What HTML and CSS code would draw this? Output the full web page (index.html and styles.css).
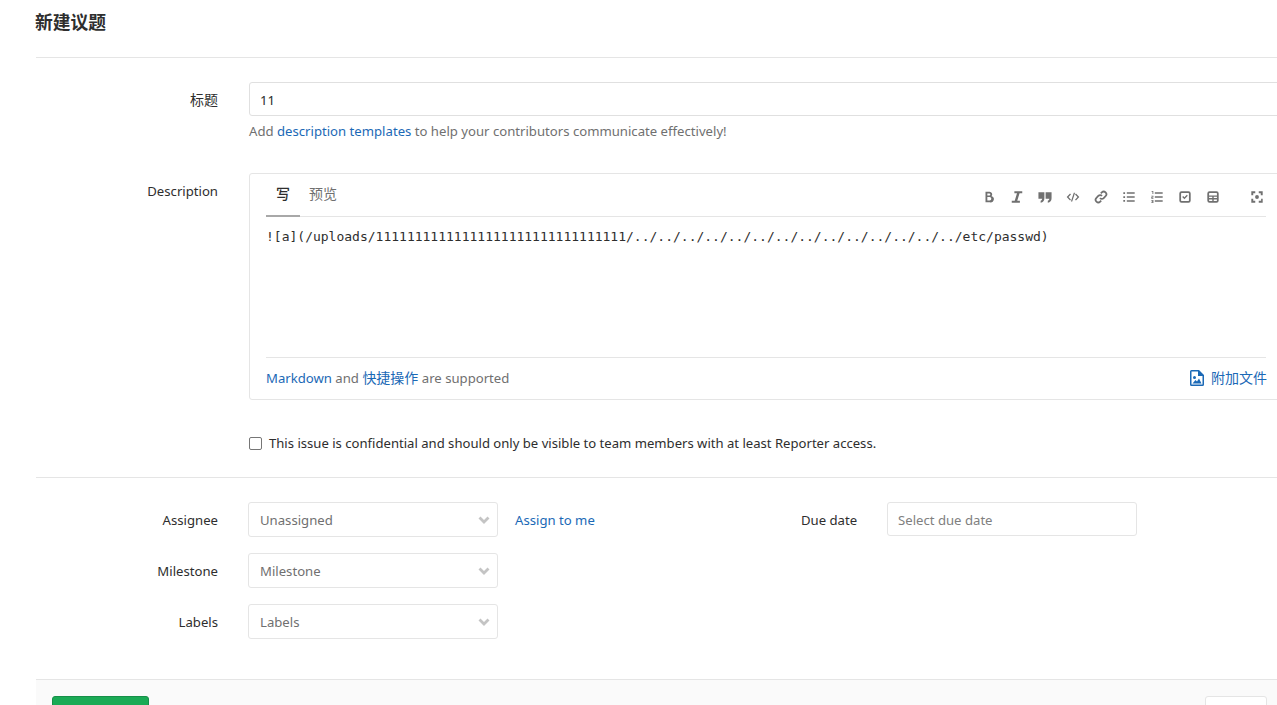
FILE: index.html
```html
<!DOCTYPE html>
<html lang="zh">
<head>
<meta charset="utf-8">
<title>新建议题</title>
<link rel="stylesheet" href="styles.css">
</head>
<body>
<main class="page">
  <h1 class="title">新建议题</h1>
  <form class="form">
    <section class="block top">
      <div class="row title-row">
        <label class="label"><span class="zh">标题</span></label>
        <div class="field">
          <div class="input wide">11</div>
          <p class="help">Add <a>description templates</a> to help your contributors communicate effectively!</p>
        </div>
      </div>
      <div class="row desc-row">
        <label class="label">Description</label>
        <div class="field">
          <div class="editor">
            <div class="editor-head">
              <div class="tabs">
                <span class="tab active zh">写</span>
                <span class="tab zh">预览</span>
              </div>
              <div class="tools">
                <svg class="ico" viewBox="0 0 16 16"><path d="M4 2h4.600a3 3 0 0 1 2.300 5A3.300 3.300 0 0 1 9 14H4zm2.100 2v2.200h2.300a1.100 1.100 0 0 0 0-2.200zm0 4.100V12h2.600a1.950 1.950 0 0 0 0-3.900z"/></svg>
                <svg class="ico" viewBox="0 0 16 16"><path d="M5 1.500h9v2.300h-3.100L8.300 12.200h3v2.300H2v-2.300h3.400L8 3.800H5z"/></svg>
                <svg class="ico" viewBox="0 0 16 16"><path d="M.5 2.500h6.800v7c0 2.800-1.500 4.500-4.300 5.200v-2.300c1-.4 1.600-1.100 1.800-2.400H.5zm8.200 0h6.800v7c0 2.800-1.500 4.500-4.300 5.200v-2.300c1-.4 1.600-1.100 1.800-2.400H8.700z"/></svg>
                <svg class="ico" viewBox="0 0 16 16"><path d="M4.600 4 .8 8l3.800 4 1.100-1L2.900 8l2.800-3zm6.800 0 3.800 4-3.800 4-1.100-1 2.800-3-2.800-3zM8.900 3h1.500L7.100 13H5.600z"/></svg>
                <svg class="ico" viewBox="0 0 16 16"><path class="line" d="M6.800 9.200a3 3 0 0 0 4.300 0l2.100-2.100a3 3 0 0 0-4.300-4.300L7.800 3.900M9.200 6.800a3 3 0 0 0-4.300 0L2.800 8.900a3 3 0 0 0 4.300 4.300l1.100-1.100"/></svg>
                <svg class="ico" viewBox="0 0 16 16"><path d="M1.500 2.500h2v2h-2zm4 .2h9v1.600h-9zM1.500 7h2v2h-2zm4 .2h9v1.600h-9zM1.500 11.500h2v2h-2zm4 .2h9v1.600h-9z"/></svg>
                <svg class="ico" viewBox="0 0 16 16"><path d="M1.800 1h2v3.600H2.800V2h-1zm3.700 1.700h9v1.600h-9zm0 4.500h9v1.600h-9zm0 4.500h9v1.600h-9zM1.500 6.500h2.400v2.200H2.600v.5h1.300v.9H1.500V7.900h1.400v-.5H1.500zm0 5h2.400v3.400H1.500V14h1.400v-.4H2v-.8h.9v-.4H1.500z"/></svg>
                <svg class="ico" viewBox="0 0 16 16"><path d="M4 1.500h8A2.500 2.500 0 0 1 14.500 4v8a2.500 2.500 0 0 1-2.500 2.500H4A2.500 2.500 0 0 1 1.500 12V4A2.500 2.500 0 0 1 4 1.500zm0 2a.5.5 0 0 0-.5.500v8a.5.5 0 0 0 .5.5h8a.5.5 0 0 0 .5-.5V4a.5.5 0 0 0-.5-.5zM4.800 8l1.100-1.100 1.400 1.400 2.800-2.900 1.100 1.100-3.900 4z"/></svg>
                <svg class="ico" viewBox="0 0 16 16"><path d="M4 1.500h8A2.500 2.500 0 0 1 14.500 4v8a2.500 2.500 0 0 1-2.500 2.500H4A2.500 2.500 0 0 1 1.500 12V4A2.500 2.500 0 0 1 4 1.500zM3.500 4v2.300h9V4a.5.5 0 0 0-.5-.5H4a.5.5 0 0 0-.5.500zm0 3.800V9.200h3.700V7.800zm5.300 0v1.400h3.700V7.800zm-5.300 3V12a.5.5 0 0 0 .5.500h3.200v-1.700zm5.300 0v1.700H12a.5.5 0 0 0 .5-.5v-1.200z"/></svg>
                <svg class="ico full" viewBox="0 0 16 16"><path d="M1.500 1.500h4.500v2.200H3.700V6H1.500zm8.500 0h4.500V6h-2.200V3.700H10zM1.500 10h2.200v2.300H6v2.200H1.500zm11.200 0h1.800v4.500H10v-2.200h2.700zM8 5.800a2.200 2.200 0 1 1 0 4.400 2.200 2.200 0 0 1 0-4.400z"/></svg>
              </div>
            </div>
            <div class="editor-body">![a](/uploads/11111111111111111111111111111111/../../../../../../../../../../../../../../etc/passwd)</div>
            <div class="editor-foot">
              <span class="note"><a>Markdown</a> and <a class="zh">快捷操作</a> are supported</span>
              <a class="attach zh">
                <svg class="attach-ico" viewBox="0 0 14 16"><path d="M1.500 0H9l5 5v9.500a1.500 1.500 0 0 1-1.500 1.500h-11A1.500 1.500 0 0 1 0 14.500v-13A1.500 1.500 0 0 1 1.500 0zm0 1.500v13h11V6H8V1.500zM4.500 6a1.500 1.500 0 1 1 0 3 1.500 1.500 0 0 1 0-3zM2.500 13.500 5.500 10l1.500 1.500 2-3 2.500 5z"/></svg>
                附加文件
              </a>
            </div>
          </div>
        </div>
      </div>
      <div class="row check-row">
        <span class="label"></span>
        <label class="check"><span class="box"></span>This issue is confidential and should only be visible to team members with at least Reporter access.</label>
      </div>
    </section>
    <section class="block meta">
      <div class="meta-col">
        <div class="row select-row">
          <label class="label">Assignee</label>
          <div class="select"><span>Unassigned</span><svg class="chev" viewBox="0 0 12 8"><path d="M1.500 1.500 6 6l4.500-4.500"/></svg></div>
          <a class="assign">Assign to me</a>
        </div>
        <div class="row select-row">
          <label class="label">Milestone</label>
          <div class="select"><span>Milestone</span><svg class="chev" viewBox="0 0 12 8"><path d="M1.500 1.500 6 6l4.500-4.500"/></svg></div>
        </div>
        <div class="row select-row">
          <label class="label">Labels</label>
          <div class="select"><span>Labels</span><svg class="chev" viewBox="0 0 12 8"><path d="M1.500 1.500 6 6l4.500-4.500"/></svg></div>
        </div>
      </div>
      <div class="due">
        <label class="due-label">Due date</label>
        <div class="date">Select due date</div>
      </div>
    </section>
    <footer class="actions">
      <button type="button" class="btn submit" aria-label="Submit"></button>
      <button type="button" class="btn cancel" aria-label="Cancel"></button>
    </footer>
  </form>
</main>
</body>
</html>
```

FILE: styles.css
```css
* { box-sizing: border-box; }
html, body { margin: 0; height: 705px; overflow: hidden; background: #fff; }
body {
  font-family: "Noto Sans", "Noto Sans CJK SC", sans-serif;
  font-size: 13.150px;
  line-height: 18px;
  color: #2e2e2e;
}
a { color: #1b69b6; text-decoration: none; }
.zh { font-size: 14px; }
.page { width: 1277px; padding-left: 36px; }
.title {
  margin: 0;
  height: 58px;
  padding: 10px 0 0 0;
  text-indent: -1px;
  font-size: 17.800px;
  line-height: 24px;
  font-weight: 700;
  color: #2e2e2e;
  border-bottom: 1px solid #e5e5e5;
}
.block { border-bottom: 1px solid #e5e5e5; }
.top { height: 420px; padding-top: 24px; }
.row { display: flex; }
.label {
  flex: 0 0 182px;
  text-align: right;
  color: #2e2e2e;
}
.title-row .label { padding-top: 9px; }
.field { flex: 1; min-width: 0; margin-left: 31px; margin-right: -12px; }
.input {
  height: 34px;
  border: 1px solid #e0e0e0;
  border-radius: 3px;
  padding: 8px 10px;
  line-height: 18px;
}
.help { margin: 6px 0 0; color: #707070; line-height: 18px; height: 18px; }
.desc-row { margin-top: 33px; }
.desc-row .label { padding-top: 9px; }
.editor {
  height: 227px;
  border: 1px solid #e5e5e5;
  border-radius: 3px;
  padding: 0 22px 0 16px;
  display: flex;
  flex-direction: column;
}
.editor-head {
  height: 43px;
  border-bottom: 1px solid #e5e5e5;
  display: flex;
  justify-content: space-between;
}
.tabs { display: flex; }
.tab {
  height: 43px;
  padding: 11px 9px 0;
  color: #707070;
}
.tab.active {
  width: 34px;
  padding: 11px 0 0 10px;
  font-weight: 500;
  color: #2e2e2e;
  border-bottom: 2px solid #a8a8a8;
}
.tools { display: flex; align-items: center; padding: 3px 2px 0 0; }
.ico {
  width: 14px;
  height: 14px;
  margin-left: 14px;
  fill: #707070;
}
.ico .line { fill: none; stroke: #707070; stroke-width: 2; }
.ico.full { margin-left: 30px; }
.editor-body {
  flex: 1;
  padding-top: 11px;
  font-family: "DejaVu Sans Mono", "Liberation Mono", monospace;
  font-size: 13px;
  line-height: 18px;
  color: #2e2e2e;
  white-space: nowrap;
}
.editor-foot {
  height: 42px;
  border-top: 1px solid #e5e5e5;
  padding-bottom: 2px;
  display: flex;
  justify-content: space-between;
  align-items: center;
  color: #707070;
}
.attach { display: flex; align-items: center; gap: 7px; margin-right: -1px; padding-left: 1px; }
.attach-ico { width: 14px; height: 16px; fill: #1b69b6; }
.check-row { margin-top: 34px; }
.check { margin-left: 31px; display: flex; align-items: center; height: 18px; font-size: 13.100px; }
.box {
  width: 13px;
  height: 13px;
  margin: 0 7px 0 0;
  border: 1px solid #767676;
  border-radius: 2px;
  background: #fff;
}
.meta {
  height: 201px;
  padding-top: 24px;
  display: flex;
  border-bottom: 0;
}
.meta-col { display: flex; flex-direction: column; gap: 16px; }
.select-row { align-items: center; height: 35px; }
.select {
  margin-left: 30px;
  width: 250px;
  height: 35px;
  border: 1px solid #e5e5e5;
  border-radius: 3px;
  padding: 0 7px 0 11px;
  display: flex;
  align-items: center;
  justify-content: space-between;
  color: #707070;
}
.chev { width: 12px; height: 8px; fill: none; stroke: #c4c4c4; stroke-width: 2.800; }
.assign { margin-left: 17px; width: 80px; white-space: nowrap; }
.due { display: flex; margin-left: 206px; height: 34px; }
.due-label { padding-top: 9px; width: 86px; }
.date {
  width: 250px;
  height: 34px;
  border: 1px solid #e5e5e5;
  border-radius: 3px;
  padding: 8px 10px;
  color: #808080;
}
.actions {
  height: 60px;
  background: #fafafa;
  border-top: 1px solid #e5e5e5;
  padding: 16px 10px 0 16px;
  display: flex;
  justify-content: space-between;
  align-items: flex-start;
}
.btn { height: 34px; border-radius: 3px; padding: 0; }
.submit { width: 97px; background: #1aaa55; border: 1px solid #168f48; }
.cancel { width: 62px; background: #fff; border: 1px solid #e5e5e5; }
```
